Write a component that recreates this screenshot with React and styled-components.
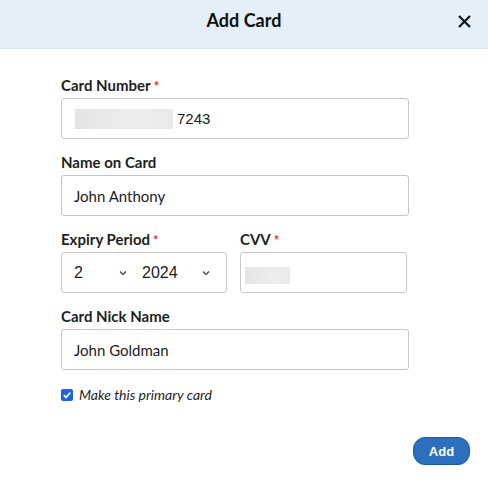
import React from "react";
import styled, { createGlobalStyle } from "styled-components";

const GlobalStyle = createGlobalStyle`
  html, body {
    margin: 0;
    padding: 0;
    background: #ffffff;
  }
  body {
    font-family: Lato, "Noto Sans", sans-serif;
    color: #1b1b1b;
  }
`;

const Modal = styled.div`
  width: 488px;
  height: 484px;
  background: #ffffff;
  display: flex;
  flex-direction: column;
`;

const Header = styled.div`
  position: relative;
  height: 49px;
  box-sizing: border-box;
  padding-top: 9px;
  background: #e4eff7;
  border-bottom: 1px solid #d9e6f0;
  display: flex;
  justify-content: center;
  align-items: flex-start;
`;

const Title = styled.h2`
  margin: 0;
  font-size: 18px;
  line-height: 22px;
  font-weight: 700;
  color: #111;
`;

const CloseButton = styled.button`
  position: absolute;
  right: 16px;
  top: 13px;
  width: 16px;
  height: 16px;
  padding: 0;
  border: 0;
  background: transparent;
  display: flex;
  align-items: center;
  justify-content: center;
`;

const Form = styled.div`
  padding: 27px 0 0 61px;
  width: 348px;
  display: flex;
  flex-direction: column;
  gap: 14px;
`;

const Field = styled.div`
  display: flex;
  flex-direction: column;
  gap: 4px;
`;

const Label = styled.label`
  display: block;
  height: 18px;
  font-size: 15px;
  line-height: 18px;
  font-weight: 700;
  color: #1e1e1e;
`;

const Required = styled.span`
  color: #e52b2b;
  margin-left: 3px;
  font-size: 13px;
  line-height: 1;
`;

const Box = styled.div`
  height: 41px;
  box-sizing: border-box;
  border: 1px solid #c6c6c6;
  border-radius: 3px;
  padding: 0 12px;
  display: flex;
  align-items: center;
  font-size: 15px;
  font-family: ${(p) =>
    p.$mono ? '"Liberation Sans", Arial, sans-serif' : 'Lato, sans-serif'};
  color: #1b1b1b;
`;

const Masked = styled.span`
  display: inline-block;
  width: ${(p) => p.$w}px;
  height: ${(p) => p.$h}px;
  margin-left: 1px;
  margin-right: ${(p) => p.$after || 0}px;
  margin-top: ${(p) => p.$top || 0}px;
  background: linear-gradient(90deg, #e4e4e4, #eeeeee 60%, #e9e9e9);
  filter: blur(0.6px);
`;

const Row = styled.div`
  display: grid;
  grid-template-columns: 166px 1fr;
  gap: 13px;
  margin-right: 2px;
`;

const SelectValue = styled.span`
  display: inline-block;
  width: ${(p) => p.$w}px;
  font-family: "Liberation Sans", Arial, sans-serif;
  font-size: 16px;
`;

const Chevron = styled.svg`
  width: 8px;
  height: 6px;
  margin-right: ${(p) => p.$gap || 0}px;
`;

const CheckRow = styled.label`
  display: flex;
  align-items: center;
  gap: 6px;
  margin-top: 2px;
  font-style: italic;
  font-size: 14px;
  line-height: 17px;
  color: #1e1e1e;
`;

const CheckBox = styled.span`
  width: 12px;
  height: 12px;
  border-radius: 2px;
  background: #1f62e4;
  display: flex;
  align-items: center;
  justify-content: center;
`;

const Footer = styled.div`
  display: flex;
  justify-content: flex-end;
  padding: 34px 18px 0 0;
`;

const AddButton = styled.button`
  width: 57px;
  height: 28px;
  border-radius: 12px;
  border: 1px solid #1b5aa3;
  background: #2b6fbd;
  color: #ffffff;
  font-family: "Liberation Sans", Arial, sans-serif;
  font-weight: 700;
  font-size: 13px;
  padding: 0;
`;

const ChevronIcon = ({ gap }) => (
  <Chevron viewBox="0 0 8 6" $gap={gap}>
    <path d="M1 1.5 L4 4.5 L7 1.5" fill="none" stroke="#333" strokeWidth="1.1" />
  </Chevron>
);

export default function App() {
  return (
    <>
      <GlobalStyle />
      <Modal>
        <Header>
          <Title>Add Card</Title>
          <CloseButton aria-label="Close">
            <svg width="13" height="13" viewBox="0 0 13 13">
              <path d="M1 1 L12 12 M12 1 L1 12" stroke="#111" strokeWidth="2.2" />
            </svg>
          </CloseButton>
        </Header>
        <Form>
          <Field>
            <Label>
              Card Number<Required>*</Required>
            </Label>
            <Box $mono>
              <Masked $w={98} $h={20} $after={4} />
              <span>7243</span>
            </Box>
          </Field>
          <Field>
            <Label>Name on Card</Label>
            <Box>John Anthony</Box>
          </Field>
          <Row>
            <Field>
              <Label>
                Expiry Period<Required>*</Required>
              </Label>
              <Box>
                <SelectValue $w={45}>2</SelectValue>
                <ChevronIcon gap={15} />
                <SelectValue $w={60}>2024</SelectValue>
                <ChevronIcon />
              </Box>
            </Field>
            <Field>
              <Label>
                CVV<Required>*</Required>
              </Label>
              <Box style={{ paddingLeft: 3 }}>
                <Masked $w={45} $h={17} $top={6} />
              </Box>
            </Field>
          </Row>
          <Field>
            <Label>Card Nick Name</Label>
            <Box>John Goldman</Box>
          </Field>
          <CheckRow>
            <CheckBox>
              <svg width="10" height="10" viewBox="0 0 10 10">
                <path d="M1.8 5.2 L4 7.4 L8.3 2.6" fill="none" stroke="#fff" strokeWidth="1.7" />
              </svg>
            </CheckBox>
            Make this primary card
          </CheckRow>
        </Form>
        <Footer>
          <AddButton>Add</AddButton>
        </Footer>
      </Modal>
    </>
  );
}
